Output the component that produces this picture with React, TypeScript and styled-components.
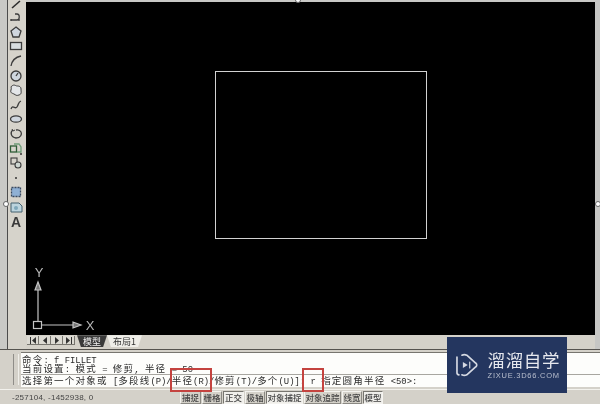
import React from 'react';
import styled, { createGlobalStyle } from 'styled-components';

const GlobalStyle = createGlobalStyle`
  html, body { margin: 0; padding: 0; background: #d4d0c8; }
`;

const Window = styled.div`
  position: relative;
  width: 600px;
  height: 404px;
  overflow: hidden;
  display: flex;
  flex-direction: column;
  background: #d4d1c9;
  filter: blur(0.45px);
  font-family: "Liberation Mono", "Noto Sans CJK SC", monospace;
`;

const Workspace = styled.div`
  display: flex;
  height: 350px;
  border-bottom: 1px solid #55534f;
`;

const LeftGutter = styled.div`
  width: 7px;
  background: #c9c9c6;
  border-right: 1px solid #4c4c4c;
`;

const RightGutter = styled.div`
  width: 5px;
  background: #c6c6c4;
`;

const Toolbar = styled.div`
  width: 18px;
  box-sizing: border-box;
  padding-right: 2px;
  display: flex;
  flex-direction: column;
  align-items: center;
  background: #d6d3cb;
`;

const Tool = styled.div<{ $short?: boolean }>`
  height: ${({ $short }) => ($short ? '10px' : '14.6px')};
  width: 16px;
  display: flex;
  align-items: center;
  justify-content: center;
  color: #3a3a3a;
  font: bold 14px "Liberation Sans", sans-serif;
`;

const Center = styled.div`
  flex: 1;
  display: flex;
  flex-direction: column;
  padding-top: 2px;
  background: #c9c9c6;
`;

const Canvas = styled.div`
  position: relative;
  flex: 1;
  background: #000;
`;

const DrawnRect = styled.div`
  position: absolute;
  left: 189px;
  top: 69px;
  width: 212px;
  height: 168px;
  border: 1px solid #d2d2d2;
  box-sizing: border-box;
`;

const UcsIcon = styled.svg`
  position: absolute;
  left: 0;
  bottom: 0;
`;

const TabRow = styled.div`
  height: 14px;
  display: flex;
  align-items: flex-start;
  background: #d4d1c9;
  padding-left: 1px;
`;

const NavButton = styled.div`
  width: 12px;
  height: 9px;
  margin-top: 1px;
  display: flex;
  align-items: center;
  justify-content: center;
  background: #dcdad3;
  border-right: 1px solid #77756f;
  border-bottom: 1px solid #77756f;
  box-sizing: border-box;
`;

const Tab = styled.div<{ $active?: boolean }>`
  height: 12px;
  display: flex;
  align-items: center;
  justify-content: center;
  padding: 0 6px;
  margin-left: ${({ $active }) => ($active ? '2px' : '0')};
  font: 9px "Noto Sans CJK SC", sans-serif;
  color: ${({ $active }) => ($active ? '#f2f2f2' : '#333')};
  background: ${({ $active }) => ($active ? '#3a3a3a' : '#efeee9')};
  clip-path: polygon(0 0, 100% 0, calc(100% - 4px) 100%, 4px 100%);
`;

const CommandArea = styled.div`
  position: relative;
  height: 39px;
  display: flex;
  align-items: stretch;
  padding: 2px 0 0 13px;
  box-sizing: border-box;
`;

const Grip = styled.div`
  width: 4px;
  margin: 2px 2px 4px 0;
  border-left: 1px solid #8f8d88;
  border-right: 1px solid #f0efea;
  background: #d4d1c9;
`;

const CommandPanel = styled.div`
  flex: 1;
  display: flex;
  flex-direction: column;
  background: #fdfdfb;
  border-top: 1px solid #77756f;
  color: #2c2c2c;
  box-sizing: border-box;
  height: 35px;
`;

const History = styled.div`
  height: 22px;
  box-sizing: border-box;
  padding-top: 1px;
  border-bottom: 1px solid #a8a6a0;
`;

const Line = styled.div<{ $h: number }>`
  height: ${({ $h }) => $h}px;
  line-height: ${({ $h }) => $h}px;
  white-space: pre;
  font-size: 9.5px;
  letter-spacing: 1.2px;
  font-family: "Noto Sans CJK SC", sans-serif;
  padding-left: 1px;
`;

const Latin = styled.span`
  font: 8.9px "Liberation Mono", monospace;
  letter-spacing: 0;
`;

const Marker = styled.div<{ $x: number; $w: number }>`
  position: absolute;
  left: ${({ $x }) => $x}px;
  width: ${({ $w }) => $w}px;
  top: 18px;
  height: 24px;
  border: 2px solid #c4433f;
  box-sizing: border-box;
`;

const StatusBar = styled.div`
  height: 15px;
  display: flex;
  align-items: center;
  border-top: 1px solid #f2f1ec;
  box-sizing: border-box;
  color: #444;
`;

const Coords = styled.div`
  width: 180px;
  padding-left: 12px;
  box-sizing: border-box;
  font: 8px "Liberation Sans", sans-serif;
  letter-spacing: 0.25px;
`;

const StatusButton = styled.div<{ $w: number; $on?: boolean }>`
  width: ${({ $w }) => $w}px;
  height: 13px;
  margin-right: 1px;
  display: flex;
  align-items: center;
  justify-content: center;
  font: 500 8.5px "Noto Sans CJK SC", sans-serif;
  box-sizing: border-box;
  background: ${({ $on }) => ($on ? '#f0efeb' : 'transparent')};
  border: 1px solid;
  border-color: ${({ $on }) => ($on ? '#77756f #f4f3ef #f4f3ef #77756f' : '#f4f3ef #8b8983 #8b8983 #f4f3ef')};
`;

const Brand = styled.div`
  position: absolute;
  left: 447px;
  top: 337px;
  width: 120px;
  height: 56px;
  box-sizing: border-box;
  padding: 0 7px 0 8px;
  display: flex;
  align-items: center;
  gap: 9px;
  background: #24365f;
  color: #e6e8ee;
`;

const BrandText = styled.div`
  display: flex;
  flex-direction: column;
  gap: 1px;
`;

const BrandName = styled.div`
  font: 400 17.5px/20px "Noto Sans CJK SC", sans-serif;
  letter-spacing: 0.6px;
  white-space: nowrap;
`;

const BrandUrl = styled.div`
  font: 7.5px/9px "Liberation Sans", sans-serif;
  letter-spacing: 0.75px;
  color: #b9bfce;
  white-space: nowrap;
`;

const Handle = styled.div<{ $x: number; $y: number }>`
  position: absolute;
  left: ${({ $x }) => $x}px;
  top: ${({ $y }) => $y}px;
  width: 4px;
  height: 4px;
  border-radius: 50%;
  background: #fff;
  border: 1px solid #666;
`;

const Glyph = ({ children }: { children: React.ReactNode }) => (
  <svg width="14" height="14" viewBox="0 0 14 14" fill="none" stroke="#3c3c3c" strokeWidth="1.3">
    {children}
  </svg>
);

const tools: React.ReactNode[] = [
  <svg key="line" width="14" height="10" viewBox="0 0 14 10" fill="none" stroke="#2c2c2c" strokeWidth="1.6"><path d="M3 8 L11 1" /></svg>,
  <Glyph key="pline"><path d="M2 10h6c3 0 3-6 0-6H6" /><path d="M2 9v2M10 9v2" /></Glyph>,
  <Glyph key="polygon"><path d="M7 2l5 4-2 6H4L2 6z" fill="#cfd6de" /></Glyph>,
  <Glyph key="rect"><rect x="1.5" y="3.5" width="11" height="7" fill="#d8dde0" /></Glyph>,
  <Glyph key="arc"><path d="M2 12C3 6 7 3 12 2" /></Glyph>,
  <Glyph key="circle"><circle cx="7" cy="7" r="5" fill="#ced6de" /><path d="M7 7l2-3" /></Glyph>,
  <Glyph key="cloud"><path d="M3 3c2-2 4 0 5 0s4 0 4 3 1 5-2 6-3 0-5-1-4-1-3-4-1-3 1-4z" fill="#e4e6e8" strokeWidth="1" /></Glyph>,
  <Glyph key="spline"><path d="M2 11c2-5 4 1 6-2s1-5 4-6" /></Glyph>,
  <Glyph key="ellipse"><ellipse cx="7" cy="7" rx="5.5" ry="3.2" fill="#cfd6de" /></Glyph>,
  <Glyph key="earc"><path d="M4 3C1 5 1.500 10 7 11c5 0 6-4 5-6-1-2-3-2.500-5-2" /><path d="M3 2l1 2 2-1" strokeWidth="1" /></Glyph>,
  <Glyph key="insert"><rect x="1.500" y="4" width="6" height="6" stroke="#2d5b35" /><path d="M5 2h5l2 3v5h-4" stroke="#6f9c78" /><circle cx="12" cy="12" r="1" fill="#333" stroke="none" /></Glyph>,
  <Glyph key="block"><rect x="2" y="2" width="6" height="6" strokeWidth="1.100" /><circle cx="9" cy="9" r="3" fill="#cdd5d0" strokeWidth="1.100" /></Glyph>,
  <Glyph key="point"><circle cx="7" cy="7" r="1" fill="#333" stroke="none" /></Glyph>,
  <Glyph key="hatch"><rect x="2.500" y="2.500" width="9" height="9" fill="#8fb0d4" stroke="#3a4a60" strokeDasharray="2 1" /></Glyph>,
  <Glyph key="region"><path d="M2 3h8l3 3v6H2z" fill="#bcd4de" stroke="#44606e" strokeWidth="1" /><circle cx="7" cy="8" r="2" fill="#7fa8bb" stroke="none" /></Glyph>,
];

const Mixed = ({ text }: { text: string }) => (
  <>
    {text.split(/([\x00-\x7f]+)/).map((part, i) =>
      i % 2 === 1 ? <Latin key={i}>{part}</Latin> : part
    )}
  </>
);

const Nav = ({ d }: { d: string }) => (
  <NavButton>
    <svg width="8" height="7" viewBox="0 0 8 7" fill="#333"><path d={d} /></svg>
  </NavButton>
);

const statusButtons = [
  { label: '捕捉', w: 21 },
  { label: '栅格', w: 20 },
  { label: '正交', w: 21, on: true },
  { label: '极轴', w: 20 },
  { label: '对象捕捉', w: 37, on: true },
  { label: '对象追踪', w: 37 },
  { label: '线宽', w: 20 },
  { label: '模型', w: 20, on: true },
];

export default function App() {
  return (
    <Window>
      <GlobalStyle />
      <Workspace>
        <LeftGutter />
        <Toolbar>
          {tools.map((icon, i) => (
            <Tool key={i} $short={i === 0}>{icon}</Tool>
          ))}
          <Tool>A</Tool>
        </Toolbar>
        <Center>
          <Canvas>
            <DrawnRect />
            <UcsIcon width="80" height="75" viewBox="0 0 80 75" fill="none" stroke="#c4c4c4" strokeWidth="1.200">
              <rect x="7.500" y="61.500" width="8" height="7" />
              <path d="M12 61V30M16 65h31" />
              <path d="M12 22l-3 8h6z" fill="#777" />
              <path d="M47 62v6l8-3z" fill="#777" />
              <text x="13" y="17" fontSize="13" fill="#b8b8b8" stroke="none" textAnchor="middle" fontFamily="Liberation Sans">Y</text>
              <text x="64" y="70" fontSize="13" fill="#b8b8b8" stroke="none" textAnchor="middle" fontFamily="Liberation Sans">X</text>
            </UcsIcon>
          </Canvas>
          <TabRow>
            <Nav d="M1 0v7h1V0zM7 0L3 3.500 7 7z" />
            <Nav d="M6 0L2 3.500 6 7z" />
            <Nav d="M2 0l4 3.500L2 7z" />
            <Nav d="M1 0l4 3.500L1 7zM6 0v7h1V0z" />
            <Tab $active>模型</Tab>
            <Tab>布局1</Tab>
          </TabRow>
        </Center>
        <RightGutter />
      </Workspace>
      <CommandArea>
        <Grip />
        <CommandPanel>
          <History>
            <Line $h={10}><Mixed text="命令: f FILLET" /></Line>
            <Line $h={9}><Mixed text="当前设置: 模式 = 修剪, 半径 = 50" /></Line>
          </History>
          <Line $h={11}><Mixed text="选择第一个对象或 [多段线(P)/半径(R)/修剪(T)/多个(U)]: r 指定圆角半径 <50>:" /></Line>
        </CommandPanel>
        <Marker $x={170} $w={42} />
        <Marker $x={302} $w={22} />
      </CommandArea>
      <StatusBar>
        <Coords>-257104, -1452938, 0</Coords>
        {statusButtons.map((b) => (
          <StatusButton key={b.label} $w={b.w} $on={b.on}>{b.label}</StatusButton>
        ))}
      </StatusBar>
      <Brand>
        <svg width="24" height="24" viewBox="0 0 24 24" fill="none" stroke="#d5d9e2" strokeWidth="1.700" strokeLinejoin="round" strokeLinecap="round">
          <path d="M2 4v16c0 1 .5 2 2 2" />
          <path d="M7 2c2-1 3-1 5 0l9 8c1.500 1 1.500 3 0 4l-9 8c-2 1-3 1-5 0" />
          <path d="M8 9l5 3-5 3z" fill="#d5d9e2" stroke="none" />
          <path d="M15 9v6" strokeWidth="1.200" />
        </svg>
        <BrandText>
          <BrandName>溜溜自学</BrandName>
          <BrandUrl>ZIXUE.3D66.COM</BrandUrl>
        </BrandText>
      </Brand>
      <Handle $x={3} $y={201} />
      <Handle $x={595} $y={201} />
      <Handle $x={295} $y={-3} />
    </Window>
  );
}
